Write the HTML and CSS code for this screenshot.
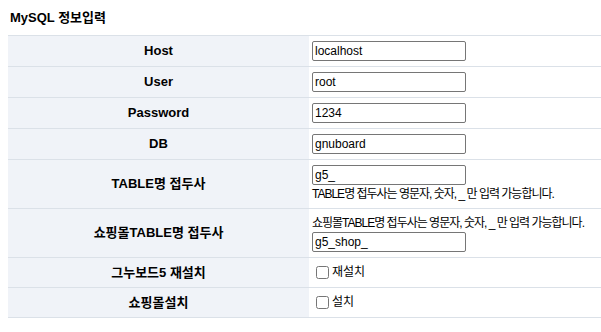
FILE: index.html
```html
<!DOCTYPE html>
<html>
    <head>
        <title>MySQL 정보입력</title>
        <link rel="stylesheet" href="styles.css">
    </head>
    <body>
        <div id="setup">
            <h2 class="title">MySQL 정보입력</h2>

            <table class="frm">
                <tr>
                    <th>Host</th>
                    <td><input type="text" class="frm-input" value="localhost"></td>
                </tr>
                <tr>
                    <th>User</th>
                    <td><input type="text" class="frm-input" value="root"></td>
                </tr>
                <tr>
                    <th>Password</th>
                    <td><input type="text" class="frm-input" value="1234"></td>
                </tr>
                <tr>
                    <th>DB</th>
                    <td><input type="text" class="frm-input" value="gnuboard"></td>
                </tr>
                <tr>
                    <th>TABLE명 접두사</th>
                    <td>
                        <input type="text" class="frm-input" value="g5_">
                        <span class="help">TABLE명 접두사는 영문자, 숫자, _ 만 입력 가능합니다.</span>
                    </td>
                </tr>
                <tr>
                    <th>쇼핑몰TABLE명 접두사</th>
                    <td>
                        <span class="help">쇼핑몰TABLE명 접두사는 영문자, 숫자, _ 만 입력 가능합니다.</span>
                        <input type="text" class="frm-input" value="g5_shop_">
                    </td>
                </tr>
                <tr class="chk-row">
                    <th>그누보드5 재설치</th>
                    <td><label><input type="checkbox" class="chk">재설치</label></td>
                </tr>
                <tr class="chk-row">
                    <th>쇼핑몰설치</th>
                    <td><label><input type="checkbox" class="chk">설치</label></td>
                </tr>
            </table>
        </div>
    </body>
</html>
```

FILE: styles.css
```css
body{
    margin: 0;
    background-color: #fff;
    color: #000;
    font-family: "Liberation Sans", "Noto Sans CJK KR", sans-serif;
}

#setup{
    padding-left: 8px;
}

.title{
    margin: 0;
    padding: 10px 2px 10px;
    font-size: 13px;
    line-height: 15px;
    font-weight: bold;
}

.frm{
    width: 100%;
    border-collapse: collapse;
    border-top: 1px solid #dbe1e8;
}

.frm th,
.frm td{
    border-bottom: 1px solid #dbe1e8;
    padding: 5px 3px;
    font-size: 12px;
    line-height: 18px;
    vertical-align: middle;
}

.frm th{
    width: 295px;
    background-color: #f0f3f8;
    font-size: 13px;
    font-weight: bold;
    text-align: center;
}

.frm td{
    text-align: left;
}

.frm-input{
    display: block;
    box-sizing: border-box;
    width: 154px;
    height: 20px;
    margin: 0;
    padding: 0 2px;
    border: 1px solid #767676;
    border-radius: 2px;
    font-family: "Liberation Sans", sans-serif;
    font-size: 12px;
    color: #000;
}

.help{
    display: block;
    height: 18px;
    white-space: nowrap;
    letter-spacing: -1px;
}

.chk-row td,
.chk-row th{
    height: 19px;
    line-height: 19px;
}

.chk-row label{
    display: flex;
    align-items: center;
    height: 19px;
}

.chk{
    width: 13px;
    height: 13px;
    margin: 3px 3px 3px 4px;
}
```
